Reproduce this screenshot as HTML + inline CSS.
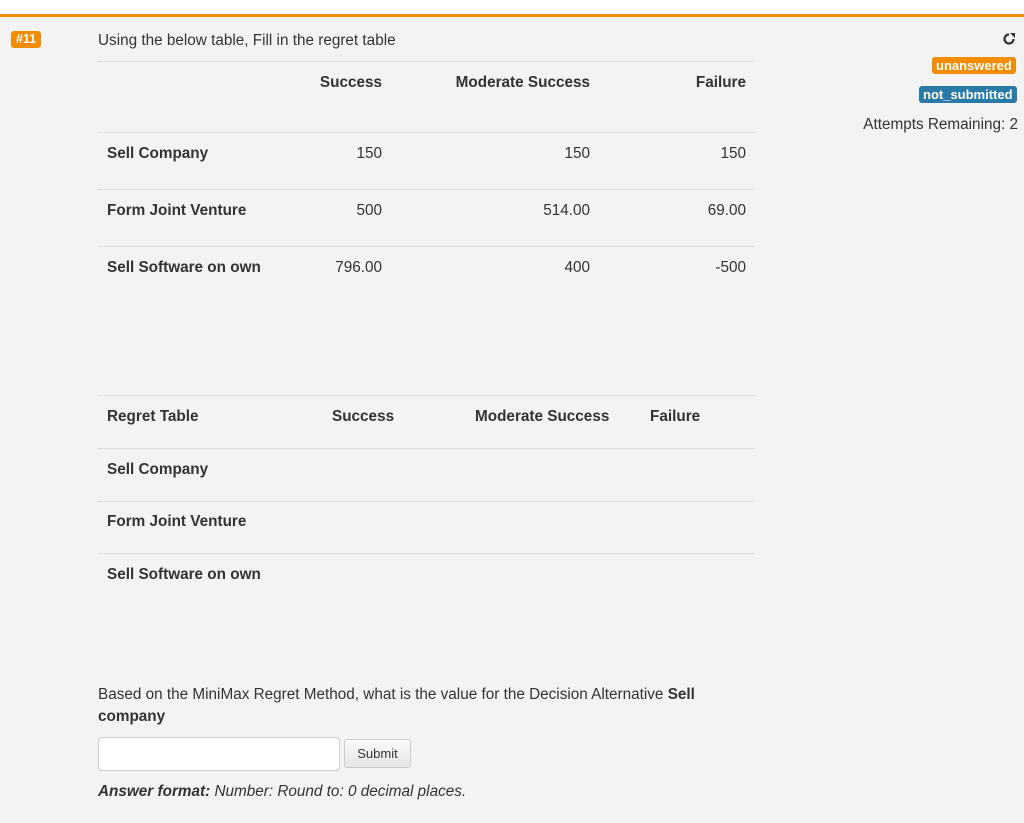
<!DOCTYPE html>
<html><head><style>
body{margin:0;width:1024px;height:823px;background:#f3f3f3;font-family:"Liberation Sans",Arial,sans-serif;font-size:15.3px;color:#333;position:relative;overflow:hidden}
.a{position:absolute;white-space:nowrap;line-height:18px}
.b{font-weight:bold}
.r{text-align:right}
.hl{position:absolute;left:98px;width:657px;height:1px;background:#ddd}
.badge{position:absolute;color:#fff;font-weight:bold;font-size:13px;border-radius:3px;line-height:17px;padding:0 4px}
</style></head><body>
<div style="position:absolute;left:0;top:0;width:1024px;height:14px;background:#fff"></div>
<div style="position:absolute;left:0;top:14px;width:1024px;height:3px;background:#f28c00"></div>
<div class="badge" style="left:11px;top:31px;background:#f28c00;font-size:12.5px;padding:0 5px">#11</div>
<div class="a" style="left:98px;top:32px">Using the below table, Fill in the regret table</div>
<svg style="position:absolute;left:1002px;top:32px" width="14" height="14" viewBox="0 0 14 14"><path d="M7 2.5A4.5 4.5 0 1 0 11.5 7" fill="none" stroke="#333" stroke-width="2.2"/><path d="M8 1h5v5z" fill="#333"/></svg>
<div class="badge" style="left:932px;top:57px;background:#f28c00">unanswered</div>
<div class="badge" style="left:919px;top:86px;background:#2a7aa8">not_submitted</div>
<div class="a" style="right:6px;top:116px">Attempts Remaining: 2</div>

<div class="hl" style="top:61px"></div>
<div class="a b r" style="right:642px;top:74px">Success</div>
<div class="a b r" style="right:434px;top:74px">Moderate Success</div>
<div class="a b r" style="right:278px;top:74px">Failure</div>
<div class="hl" style="top:132px"></div>
<div class="a b" style="left:107px;top:145px">Sell Company</div>
<div class="a r" style="right:642px;top:145px">150</div>
<div class="a r" style="right:434px;top:145px">150</div>
<div class="a r" style="right:278px;top:145px">150</div>
<div class="hl" style="top:189px"></div>
<div class="a b" style="left:107px;top:202px">Form Joint Venture</div>
<div class="a r" style="right:642px;top:202px">500</div>
<div class="a r" style="right:434px;top:202px">514.00</div>
<div class="a r" style="right:278px;top:202px">69.00</div>
<div class="hl" style="top:246px"></div>
<div class="a b" style="left:107px;top:259px">Sell Software on own</div>
<div class="a r" style="right:642px;top:259px">796.00</div>
<div class="a r" style="right:434px;top:259px">400</div>
<div class="a r" style="right:278px;top:259px">-500</div>

<div class="hl" style="top:395px"></div>
<div class="a b" style="left:107px;top:408px">Regret Table</div>
<div class="a b" style="left:332px;top:408px">Success</div>
<div class="a b" style="left:475px;top:408px">Moderate Success</div>
<div class="a b" style="left:650px;top:408px">Failure</div>
<div class="hl" style="top:448px"></div>
<div class="a b" style="left:107px;top:461px">Sell Company</div>
<div class="hl" style="top:501px"></div>
<div class="a b" style="left:107px;top:513px">Form Joint Venture</div>
<div class="hl" style="top:553px"></div>
<div class="a b" style="left:107px;top:566px">Sell Software on own</div>

<div class="a" style="left:98px;top:684px;line-height:22px">Based on the MiniMax Regret Method, what is the value for the Decision Alternative <b>Sell</b><br><b>company</b></div>
<div style="position:absolute;left:98px;top:737px;width:240px;height:32px;background:#fff;border:1px solid #ccc;border-radius:4px"></div>
<div style="position:absolute;left:344px;top:739px;width:65px;height:27px;background:linear-gradient(#fafafa,#e6e6e6);border:1px solid #ccc;border-radius:3px;font-size:13px;text-align:center;line-height:27px;color:#333">Submit</div>
<div class="a" style="left:98px;top:783px;font-style:italic"><b>Answer format:</b> Number: Round to: 0 decimal places.</div>
</body></html>
